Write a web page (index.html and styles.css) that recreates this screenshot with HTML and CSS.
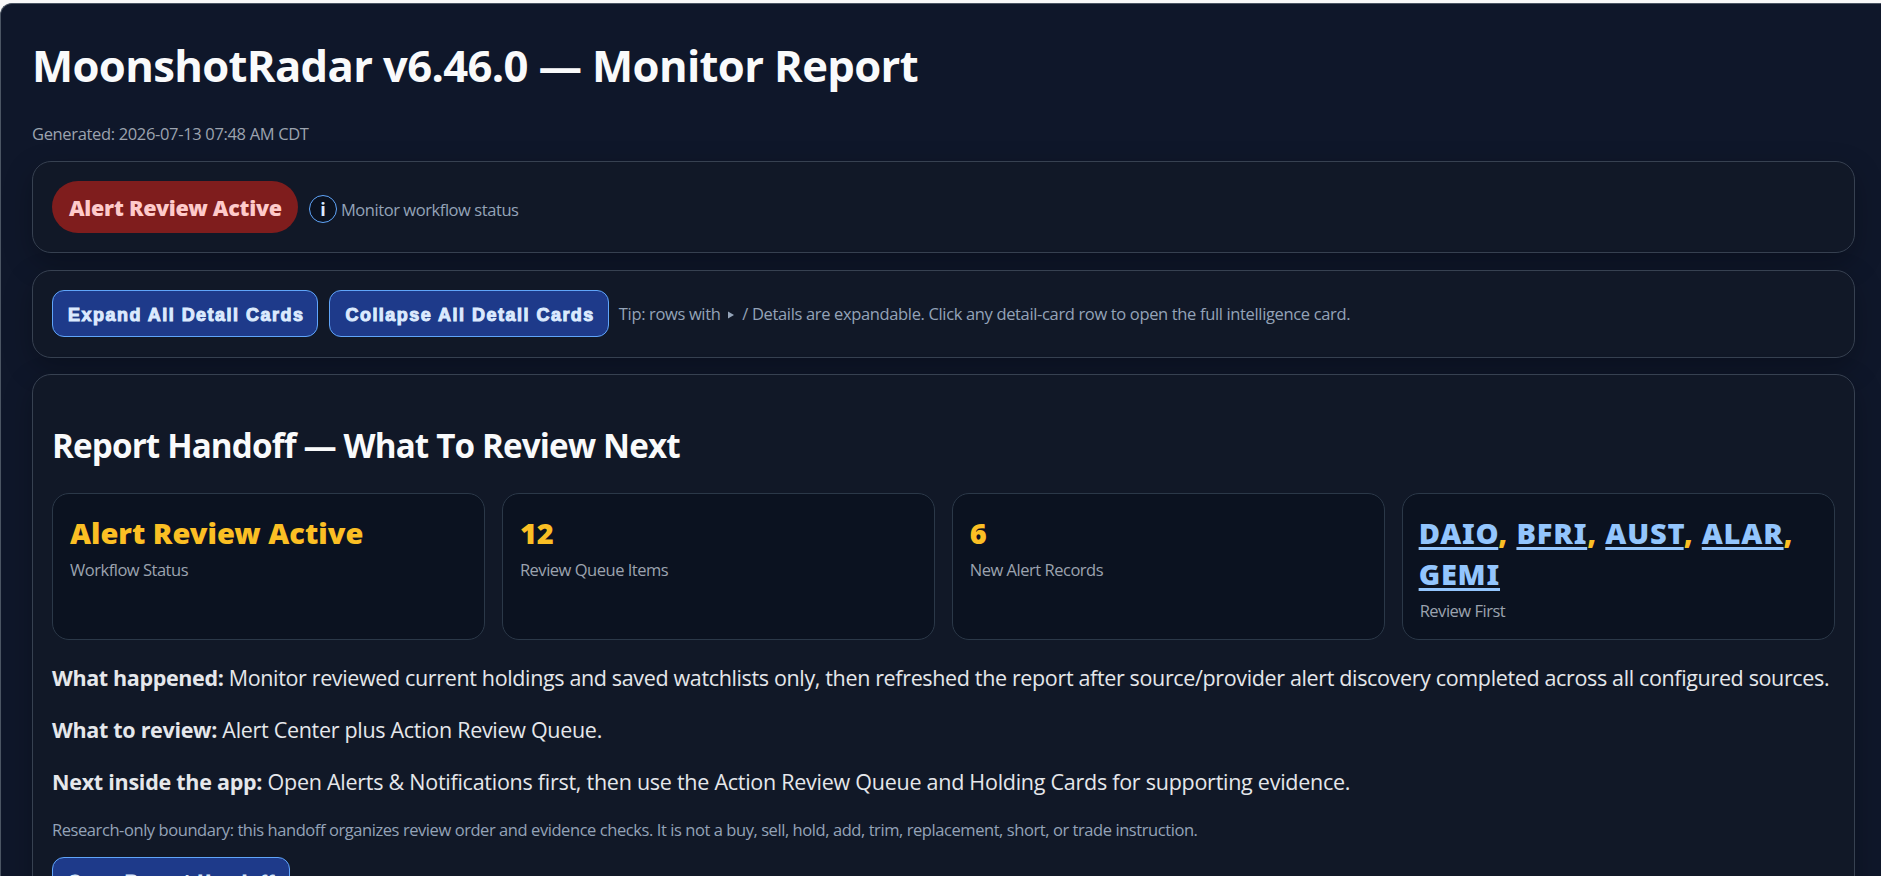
FILE: index.html
```html
<!DOCTYPE html>
<html lang="en">
<head>
<meta charset="utf-8">
<title>MoonshotRadar v6.46.0 — Monitor Report</title>
<link rel="stylesheet" href="styles.css">
</head>
<body>
<main class="report">
  <h1 class="title">MoonshotRadar v6.46.0 — Monitor Report</h1>
  <p class="muted generated">Generated: 2026-07-13 07:48 AM CDT</p>

  <section class="card status">
    <span class="pill">Alert Review Active</span>
    <span class="info">i</span>
    <span class="muted">Monitor workflow status</span>
  </section>

  <section class="card controls">
    <button class="btn">Expand All Detail Cards</button>
    <button class="btn">Collapse All Detail Cards</button>
    <span class="muted tip">Tip: rows with <svg class="caret" viewBox="0 0 6 8" width="6" height="8"><path d="M0 0.5 6 4 0 7.5Z"/></svg> / Details are expandable. Click any detail-card row to open the full intelligence card.</span>
  </section>

  <section class="card handoff">
    <h2 class="heading">Report Handoff — What To Review Next</h2>
    <div class="metrics">
      <div class="metric"><div class="value">Alert Review Active</div><div class="muted">Workflow Status</div></div>
      <div class="metric"><div class="value">12</div><div class="muted">Review Queue Items</div></div>
      <div class="metric"><div class="value">6</div><div class="muted">New Alert Records</div></div>
      <div class="metric"><div class="value tickers"><a href="#">DAIO</a>, <a href="#">BFRI</a>, <a href="#">AUST</a>, <a href="#">ALAR</a>, <a href="#">GEMI</a></div><div class="muted">Review First</div></div>
    </div>
    <p class="line happened"><b>What happened:</b> Monitor reviewed current holdings and saved watchlists only, then refreshed the report after source/provider alert discovery completed across all configured sources.</p>
    <p class="line"><b>What to review:</b> Alert Center plus Action Review Queue.</p>
    <p class="line next"><b>Next inside the app:</b> Open Alerts &amp; Notifications first, then use the Action Review Queue and Holding Cards for supporting evidence.</p>
    <p class="muted boundary">Research-only boundary: this handoff organizes review order and evidence checks. It is not a buy, sell, hold, add, trim, replacement, short, or trade instruction.</p>
    <button class="btn">Copy Report Handoff</button>
  </section>
</main>
</body>
</html>
```
FILE: styles.css
```css
* { box-sizing: border-box; }
html { background: #f8f8f8; }
body {
  margin: 0;
  height: 876px;
  overflow: hidden;
  padding-top: 3px;
  font-family: "Open Sans", "Noto Sans", sans-serif;
  color: #e5e7eb;
}
h1, h2, p { margin: 0; }

.report {
  height: 873px;
  overflow: hidden;
  padding: 31px 26px 0 31px;
  background: #0f172a;
  border: 1px solid #4b5563;
  border-right: 0;
  border-bottom: 0;
  border-radius: 12px 0 0 0;
}
.title {
  font-size: 43.6px;
  line-height: 61px;
  letter-spacing: -0.65px;
  color: #f9fafb;
  white-space: nowrap;
}
.muted {
  font-size: 16.5px;
  line-height: 26px;
  letter-spacing: -0.43px;
  color: #94a3b8;
  white-space: nowrap;
}
.generated { margin: 25px 0 14px; letter-spacing: -0.34px; color: #9ca3af; }

.card {
  margin-bottom: 17px;
  padding: 19px;
  background: #111827;
  border: 1px solid #374151;
  border-radius: 19px;
  box-shadow: 0 10px 29px rgba(0, 0, 0, 0.25);
}
.status { display: flex; align-items: center; height: 92px; }
.pill {
  height: 52px;
  padding: 0 16px 0 17px;
  border-radius: 26px;
  background: #7f1d1d;
  color: #fecaca;
  font: 900 21.5px/53px "Noto Sans", sans-serif;
  letter-spacing: -0.24px;
}
.info {
  width: 28px;
  height: 28px;
  margin: 4px 4px 0 11px;
  border: 1px solid #60a5fa;
  border-radius: 50%;
  background: #0b1220;
  color: #dbeafe;
  font: 700 18px/26px "Open Sans", sans-serif;
  text-align: center;
}
.status .muted { margin-top: 5px; }

.controls { display: flex; align-items: flex-start; height: 88px; margin-bottom: 16px; }
.btn {
  height: 47px;
  margin: 0 11px 0 0;
  padding: 2px 13px 0 15px;
  border: 1px solid #60a5fa;
  border-radius: 12px;
  background: #1e3a8a;
  color: #dbeafe;
  font: 700 18px/45px "Liberation Sans", Arial, sans-serif;
  letter-spacing: 1.48px;
  -webkit-text-stroke: 1px #dbeafe;
  white-space: nowrap;
}
.tip { margin: 11px 0 0 -1px; letter-spacing: -0.35px; }
.caret { margin: 0 4px 1px 4px; fill: #94a3b8; }

.handoff { padding-top: 48px; }
.handoff .btn { letter-spacing: 1.4px; }
.heading {
  font-size: 33.2px;
  line-height: 45px;
  letter-spacing: -0.86px;
  color: #f9fafb;
}
.metrics {
  display: grid;
  grid-template-columns: repeat(4, 1fr);
  gap: 16.5px;
  margin: 25px 0 22px;
}
.metric {
  height: 147px;
  padding: 18px 16px 0 17px;
  background: #0b1220;
  border: 1px solid #2b3848;
  border-radius: 17px;
}
.metric .muted { color: #9ca3af; letter-spacing: -0.48px; }
.value {
  margin-bottom: 4px;
  font: 900 29px/41px "Noto Sans", sans-serif;
  color: #fbbf24;
}
.tickers { margin-left: -1px; letter-spacing: 0.8px; }
.tickers a { color: #93c5fd; text-decoration-thickness: 3px; text-underline-offset: 3px; text-decoration-skip-ink: none; }

.line {
  margin-bottom: 20px;
  font-size: 21.5px;
  line-height: 32px;
  letter-spacing: -0.3px;
  white-space: nowrap;
}
.happened { letter-spacing: -0.355px; }
.next { letter-spacing: -0.26px; }
.boundary { margin: -1px 0 14px; }
```
